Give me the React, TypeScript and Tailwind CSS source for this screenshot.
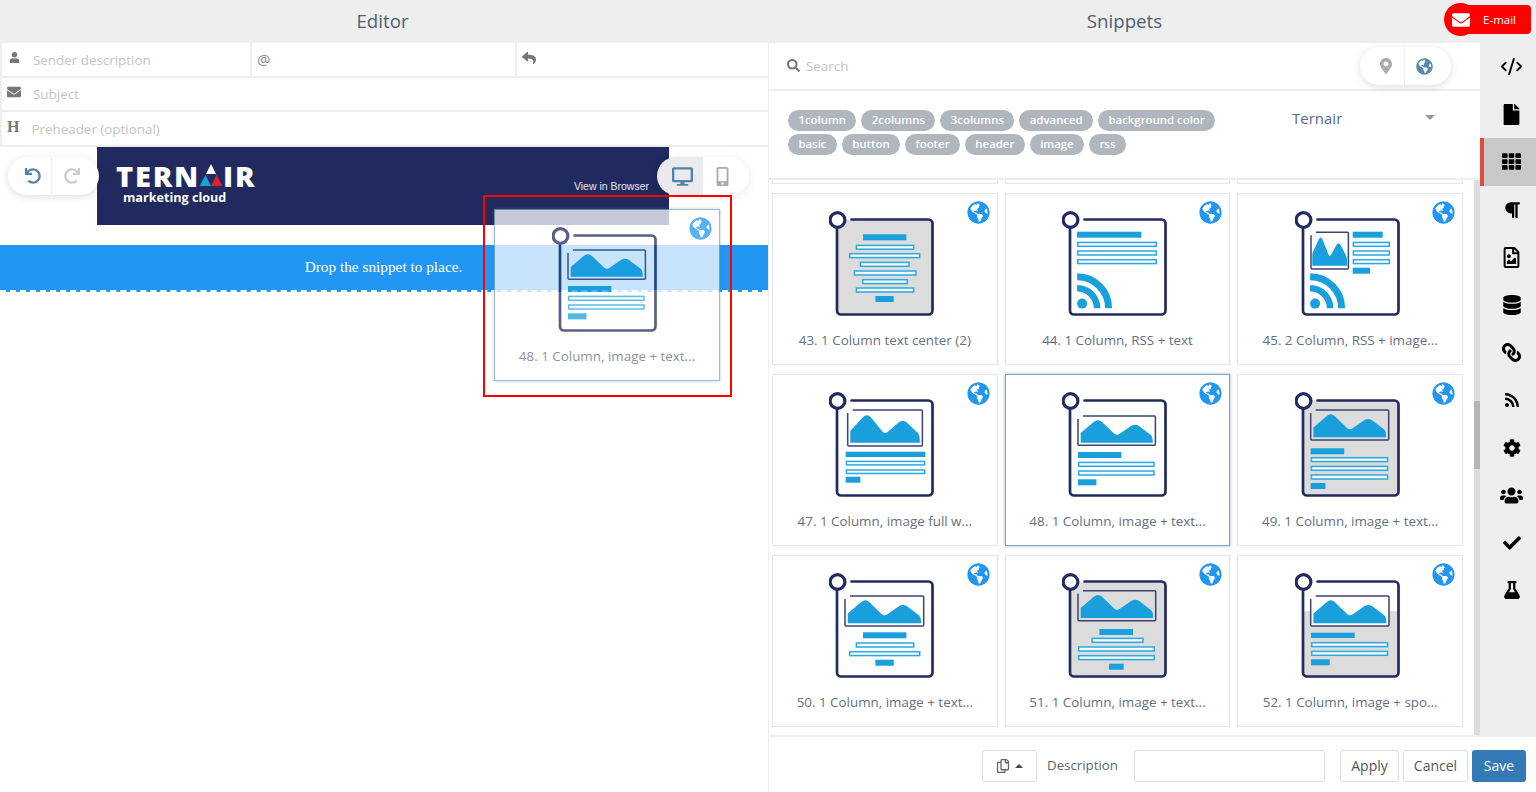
import React from 'react';
import {
  FaFile, FaTh, FaParagraph, FaRegFileImage, FaDatabase, FaLink, FaRss, FaCog, FaUsers, FaCheck, FaFlask,
  FaUser, FaEnvelope, FaMapMarkerAlt, FaGlobeAmericas, FaUndo, FaRedo, FaDesktop, FaMobileAlt, FaSearch, FaReply, FaRegCopy,
} from 'react-icons/fa';
import { CodeXml } from 'lucide-react';

const NAVY = '#222b60';
const BLUE = '#19a0dc';

type R = [number, number, number, number];
type Cfg = {
  gray?: boolean;
  grayFrom?: number;
  imgWhite?: boolean;
  img?: R;
  filled: R[];
  outlined: R[];
  rss?: boolean;
  dy?: number;
};

function Thumb({ gray, grayFrom, imgWhite, img, filled, outlined, rss, dy = 0 }: Cfg) {
  return (
    <svg width="110" height="110" viewBox="0 0 110 110" className="block">
      {gray && <rect x="9" y="10" width="94" height="94" rx="3" fill="#dcdcdc" />}
      {grayFrom !== undefined && <rect x="9" y={grayFrom} width="94" height={104 - grayFrom} rx="3" fill="#dcdcdc" />}
      <path
        d="M22.5 9.5H99.5a4 4 0 0 1 4 4V100.5a4 4 0 0 1 -4 4H12a4 4 0 0 1 -4 -4V16"
        fill="none"
        stroke={NAVY}
        strokeWidth="2.7"
        strokeLinecap="round"
      />
      <circle cx="8.5" cy="10" r="7.4" fill="#fff" stroke={NAVY} strokeWidth="3.2" />
      <g transform={`translate(0.7 ${dy})`}>
        {img && (
          <g>
            {imgWhite && <rect x={img[0]} y={img[1]} width={img[2] - img[0]} height={img[3] - img[1]} fill="#fff" />}
            <path
              d={`M${img[0] + 5} ${img[1]}H${img[2] - 1}Q${img[2]} ${img[1]} ${img[2]} ${img[1] + 1}V${img[3] - 1}Q${img[2]} ${img[3]} ${img[2] - 1} ${img[3]}H${img[0] + 1}Q${img[0]} ${img[3]} ${img[0]} ${img[3] - 1}V${img[1] + 3}`}
              fill="none"
              stroke="#3b4372"
              strokeWidth="1.5"
            />
            <g transform={`translate(${img[0]} ${img[1]}) scale(${(img[2] - img[0]) / 77.4} ${(img[3] - img[1]) / 29.3})`}>
              <path
                d="M2.7 17L15.7 6Q20 2.5 24 6L36 17.5Q38.7 20 42 17.5L53 10Q57 7.5 61 10L73 19Q74.7 21 74.7 24V26.7H2.7Z"
                fill={BLUE}
              />
            </g>
          </g>
        )}
        {filled.map((b, i) => (
          <rect key={i} x={b[0]} y={b[1]} width={b[2] - b[0]} height={b[3] - b[1]} fill={BLUE} />
        ))}
        {outlined.map((b, i) => (
          <rect
            key={i}
            x={b[0] + 0.7}
            y={b[1] + 0.7}
            width={b[2] - b[0] - 1.4}
            height={b[3] - b[1] - 1.4}
            fill="#f4fafd"
            stroke="#2ba8df"
            strokeWidth="1.5"
          />
        ))}
        {rss && (
          <g>
            <circle cx="19.4" cy="93.6" r="5" fill={BLUE} />
            <path d="M14.4 78.3A20 20 0 0 1 34.4 98.3" fill="none" stroke={BLUE} strokeWidth="6.5" />
            <path d="M14.4 66.8A31.5 31.5 0 0 1 45.9 98.3" fill="none" stroke={BLUE} strokeWidth="7" />
          </g>
        )}
      </g>
    </svg>
  );
}

function Card({ label, cfg, selected }: { label: string; cfg?: Cfg; selected?: boolean }) {
  return (
    <div
      className={`relative h-[172px] bg-white border ${
        selected ? 'border-[#7fa6c6] shadow-[0_0_3px_rgba(70,110,150,0.5)]' : 'border-[#e6e6e6]'
      }`}
    >
      {cfg && (
        <>
          <FaGlobeAmericas className="absolute right-[7px] top-[7px] text-[#2196f3] bg-white rounded-full" size={23} />
          <div className="flex justify-center pt-[16px] pr-[1px]">
            <Thumb {...cfg} />
          </div>
          <div className="mt-[10px] text-center text-[13.4px] leading-[20px] text-[#667080]">{label}</div>
        </>
      )}
    </div>
  );
}

const c43: Cfg = {
  gray: true,
  filled: [[33.3, 24.3, 76.7, 30.3], [45.7, 86, 64, 92]],
  outlined: [
    [26, 34.7, 84.7, 39.9], [19.3, 43, 90.7, 48.3], [30, 51.7, 80, 57], [24, 60.3, 87, 65.7], [32.3, 69, 78.3, 74.3], [26, 77.3, 84.7, 82.7],
  ],
};
const c44: Cfg = {
  rss: true,
  filled: [[14.3, 21.7, 78.7, 27.7]],
  outlined: [[14.3, 31.7, 94.3, 37], [14.3, 40.3, 94.3, 45.7], [14.3, 49, 94.3, 54.3]],
};
const c45: Cfg = {
  rss: true,
  img: [15.3, 22.3, 52.7, 59],
  filled: [[57, 21.7, 87, 27.7], [57, 57.7, 74.3, 63.7]],
  outlined: [[57, 31.7, 94.3, 37], [57, 40.3, 94.3, 45.7], [57, 49, 94.3, 54.3]],
};
const c47: Cfg = {
  dy: 1,
  img: [18, 18, 92.7, 54],
  filled: [[16, 59.7, 95.7, 65], [16, 84.7, 30.7, 90.7]],
  outlined: [[16, 68.7, 95.7, 73.6], [16, 77.3, 95.7, 82.2]],
};
const c48: Cfg = {
  dy: 1,
  img: [15.3, 24, 92.7, 53.3],
  filled: [[15.3, 60, 58.7, 66], [15.3, 87.3, 33.7, 93.3]],
  outlined: [[15.3, 69.7, 92, 75], [15.3, 78.3, 92, 83.7]],
};
const c49: Cfg = {
  dy: 1,
  gray: true,
  img: [15, 18, 93, 48],
  filled: [[15, 56.3, 48.5, 62.3], [15, 91, 29.7, 97]],
  outlined: [[15, 65, 92.5, 70.3], [15, 73.7, 92.5, 79], [15, 82.3, 92.5, 87.7]],
};
const c50: Cfg = {
  dy: 1,
  img: [15.3, 23, 94, 53],
  filled: [[33.3, 59.3, 76.7, 65.3], [45.7, 86.7, 64, 92.7]],
  outlined: [[26, 69.3, 84.7, 74.7], [19.3, 78, 90.7, 83.3]],
};
const c51: Cfg = {
  dy: 1,
  gray: true,
  img: [15.3, 17.7, 93, 47.7],
  filled: [[36.7, 56, 70.3, 62], [46.3, 90.7, 61, 96.7]],
  outlined: [[28.7, 64.7, 81, 70], [15.3, 73.3, 92.3, 78.7], [15.3, 82, 92.3, 87.3]],
};
const c52: Cfg = {
  dy: 1,
  grayFrom: 39,
  imgWhite: true,
  img: [15, 23, 93.3, 53],
  filled: [[15.3, 59.7, 59, 65], [15.3, 86.3, 34, 92.3]],
  outlined: [[15.3, 69, 92.5, 74.3], [15.3, 77.7, 92.5, 83]],
};

const tags = ['1column', '2columns', '3columns', 'advanced', 'background color', 'basic', 'button', 'footer', 'header', 'image', 'rss'];

function FormRow({ children }: { children: React.ReactNode }) {
  return <div className="flex h-[34.67px] shrink-0 border-b-2 border-[#eeeeee] border-l-2 items-center">{children}</div>;
}

function Sidebar() {
  const items = [
    { i: <CodeXml size={23} strokeWidth={2} /> },
    { i: <FaFile size={21} /> },
    { i: <FaTh size={19} />, active: true },
    { i: <FaParagraph size={18} /> },
    { i: <FaRegFileImage size={21} /> },
    { i: <FaDatabase size={20} /> },
    { i: <FaLink size={19} className="-scale-x-100" /> },
    { i: <FaRss size={16} /> },
    { i: <FaCog size={18} /> },
    { i: <FaUsers size={23} /> },
    { i: <FaCheck size={18} /> },
    { i: <FaFlask size={18} /> },
  ];
  return (
    <div className="w-[56px] shrink-0 bg-[#eeeeee] text-black">
      {items.map((it, k) => (
        <div
          key={k}
          className={`h-[47.6px] flex items-center justify-center ${
            it.active ? 'bg-[#c8c8c8] border-l-[4px] border-[#e04a3c] pl-[3px]' : 'pl-[7px]'
          }`}
        >
          {it.i}
        </div>
      ))}
    </div>
  );
}

export default function App() {
  return (
    <div
      className="relative flex h-[792px] w-[1536px] overflow-hidden bg-white text-[#555]"
      style={{ fontFamily: '"Open Sans", sans-serif' }}
    >
      {/* Left */}
      <div className="w-[769px] shrink-0 border-r border-[#eeeeee] flex flex-col">
        <div className="h-[43px] shrink-0 bg-[#eeeeee] flex items-center justify-center text-[18.7px] text-[#4f5f70] pr-[3px]">Editor</div>
        <FormRow>
          <div className="w-[250px] h-full flex items-center border-r-2 border-[#eeeeee]">
            <FaUser size={11} className="ml-[7px] text-[#777] -mt-[3px]" />
            <span className="ml-[13px] mt-[1px] text-[13.4px] text-[#c4c4c4]">Sender description</span>
          </div>
          <div className="w-[265px] h-full flex items-center border-r-2 border-[#eeeeee]">
            <span className="ml-[5px] text-[15px] text-[#888]">@</span>
          </div>
          <FaReply size={14} className="ml-[5px] text-[#777] -mt-[3px]" />
        </FormRow>
        <FormRow>
          <FaEnvelope size={14} className="ml-[5px] text-[#777] -mt-[3px]" />
          <span className="ml-[12px] text-[13.4px] text-[#c4c4c4]">Subject</span>
        </FormRow>
        <FormRow>
          <span className="ml-[5px] text-[16px] font-bold text-[#777] -mt-[3px]" style={{ fontFamily: '"Liberation Serif", serif' }}>H</span>
          <span className="ml-[12px] text-[13.4px] text-[#c4c4c4]">Preheader (optional)</span>
        </FormRow>
        <div className="flex-1 bg-white">
          <div className="ml-[97px] w-[572px] h-[78px] bg-[#212a5e] relative flex items-end justify-end pr-[20px] pb-[33px]">
            <div className="absolute left-[19px] top-[17px] text-white">
              <div className="flex items-center h-[24px] text-[29px] font-extrabold tracking-[1.8px] leading-[24px]">
                <span>TERN</span>
                <svg width="24" height="23" viewBox="0 0 24 23" className="-ml-[1px] -mt-[1px]">
                  <path d="M12 0L17 10H7Z" fill="#fff" />
                  <path d="M6.5 11L12 22H0.5Z" fill="#1a9fdc" />
                  <path d="M17.5 11L23.5 22H12Z" fill="#e0202e" />
                </svg>
                <span>IR</span>
              </div>
              <div className="ml-[7px] mt-[3px] text-[12.6px] font-bold leading-[14px]">marketing cloud</div>
            </div>
            <span className="text-[10.5px] leading-[12px] text-[#e4e6f2]" style={{ fontFamily: '"Liberation Sans", sans-serif' }}>View in Browser</span>
          </div>
          <div className="mt-[20px] h-[47px] bg-[#2196f3] border-b-2 border-dashed border-white flex items-center justify-center text-white text-[15.3px] pr-[1px]" style={{ fontFamily: '"Liberation Serif", serif' }}>
            Drop the snippet to place.
          </div>
        </div>
      </div>

      {/* Right */}
      <div className="flex-1 flex flex-col min-w-0">
        <div className="h-[43px] shrink-0 bg-[#eeeeee] flex items-center justify-center text-[18.7px] text-[#4f5f70] pr-[56px]">Snippets</div>
        <div className="flex-1 min-h-0 flex">
          <div className="flex-1 min-w-0 flex flex-col relative">
            <div className="h-[48px] shrink-0 border-b-2 border-[#eeeeee] flex items-center pl-[18px] bg-white z-10">
              <FaSearch size={13} className="text-[#777] -mt-[2px]" />
              <span className="ml-[6px] text-[13.4px] text-[#c4c4c4]">Search</span>
            </div>
            <div className="h-[89px] shrink-0 border-b-2 border-[#eeeeee] bg-white z-10 flex pl-[19px] pt-[19px]">
              <div className="w-[440px] flex flex-wrap content-start gap-x-[5px] gap-y-[3px]">
                {tags.map((t) => (
                  <span key={t} className="h-[21px] px-[10.4px] rounded-full bg-[#b0b6bd] text-white text-[11.4px] font-semibold leading-[20px]">{t}</span>
                ))}
              </div>
              <div className="ml-[64px] w-[160px] flex justify-between items-start -mt-[3px]">
                <span className="text-[15px] text-[#5a6b85]">Ternair</span>
                <span className="mt-[8px] mr-[17px] w-0 h-0 border-x-[5px] border-x-transparent border-t-[5px] border-t-[#999]" />
              </div>
            </div>
            <div className="flex-1 min-h-0 overflow-hidden flex">
              <div className="flex-1 min-w-0 pl-[3px] pr-[11px]">
                <div className="grid grid-cols-3 gap-x-[7px] gap-y-[9px] -mt-[168px]">
                  <Card label="" />
                  <Card label="" />
                  <Card label="" />
                  <Card label="43. 1 Column text center (2)" cfg={c43} />
                  <Card label="44. 1 Column, RSS + text" cfg={c44} />
                  <Card label="45. 2 Column, RSS + image..." cfg={c45} />
                  <Card label="47. 1 Column, image full w..." cfg={c47} />
                  <Card label="48. 1 Column, image + text..." cfg={c48} selected />
                  <Card label="49. 1 Column, image + text..." cfg={c49} />
                  <Card label="50. 1 Column, image + text..." cfg={c50} />
                  <Card label="51. 1 Column, image + text..." cfg={c51} />
                  <Card label="52. 1 Column, image + spo..." cfg={c52} />
                </div>
              </div>
              <div className="w-[6px] shrink-0 bg-[#dddddd] relative">
                <div className="absolute left-0 right-0 top-[221px] h-[68px] bg-[#b5b5b5]" />
              </div>
            </div>
            {/* Location pill */}
            <div className="absolute z-20 left-[591px] top-[4px] w-[91px] h-[38px] rounded-full bg-white shadow-[0_2px_8px_rgba(0,0,0,0.13)] flex items-center">
              <div className="w-[45px] h-full flex items-center justify-center border-r border-[#eeeeee] pl-[7px]">
                <FaMapMarkerAlt size={16} className="text-[#aaaaaa]" />
              </div>
              <div className="flex-1 flex items-center justify-center pr-[7px]">
                <FaGlobeAmericas size={17} className="text-[#5b88ad]" />
              </div>
            </div>
          </div>
          <Sidebar />
        </div>
        <div className="h-[57px] shrink-0 border-t-2 border-[#eeeeee] bg-white flex items-center pl-[213px] pt-[2px] text-[14px] text-[#555]">
          <div className="w-[55px] h-[32px] border border-[#dddddd] rounded-[3px] flex items-center justify-center gap-[5px]">
            <FaRegCopy size={14} className="text-[#666]" />
            <span className="w-0 h-0 border-x-[4px] border-x-transparent border-b-[4px] border-b-[#444]" />
          </div>
          <span className="ml-[10px] w-[87px] text-[13.3px] text-[#5c6670]">Description</span>
          <div className="w-[191px] h-[32px] border border-[#dddddd] rounded-[3px]" />
          <div className="ml-[15px] w-[59px] h-[32px] border border-[#dddddd] rounded-[3px] flex items-center justify-center">Apply</div>
          <div className="ml-[4px] w-[65px] h-[32px] border border-[#dddddd] rounded-[3px] flex items-center justify-center">Cancel</div>
          <div className="ml-[4px] w-[54px] h-[32px] rounded-[3px] bg-[#337ab7] text-white flex items-center justify-center">Save</div>
        </div>
      </div>

      {/* Floating toolbars */}
      <div className="absolute left-[8px] top-[157px] w-[91px] h-[38px] rounded-full bg-white shadow-[0_2px_8px_rgba(0,0,0,0.13)] flex items-center">
        <div className="w-[44px] h-full flex items-center justify-center border-r border-[#eeeeee] pl-[6px]">
          <FaUndo size={16} className="text-[#4f83a8]" />
        </div>
        <div className="flex-1 flex items-center justify-center pr-[8px]">
          <FaRedo size={16} className="text-[#cccccc]" />
        </div>
      </div>
      <div className="absolute left-[657px] top-[157px] w-[92px] h-[38px] rounded-full shadow-[0_2px_8px_rgba(0,0,0,0.1)] flex overflow-hidden">
        <div className="w-[46px] h-full bg-[#eaeaee] flex items-center justify-center border-r border-[#eeeeee] pl-[6px]">
          <FaDesktop size={21} className="text-[#4f83a8]" />
        </div>
        <div className="flex-1 bg-white flex items-center justify-center pr-[8px]">
          <FaMobileAlt size={19} className="text-[#aaaaaa]" />
        </div>
      </div>

      {/* Dragged snippet */}
      <div className="absolute left-[494px] top-[209px] w-[226px] opacity-75">
        <Card label="48. 1 Column, image + text..." cfg={{ ...c48, dy: 0 }} selected />
      </div>
      <div className="absolute left-[483px] top-[195px] w-[249px] h-[202px] border-2 border-[#ff0000]" />

      {/* E-mail */}
      <div className="absolute left-[1460px] top-[5px] w-[71px] h-[29px] bg-[#ff0000] rounded-[4px] flex items-center justify-end pr-[15px] text-white text-[11.5px]">E-mail</div>
      <div className="absolute left-[1444px] top-[3px] w-[33px] h-[33px] rounded-full bg-[#ff0000] flex items-center justify-center">
        <FaEnvelope size={18} className="text-white" />
      </div>
    </div>
  );
}
